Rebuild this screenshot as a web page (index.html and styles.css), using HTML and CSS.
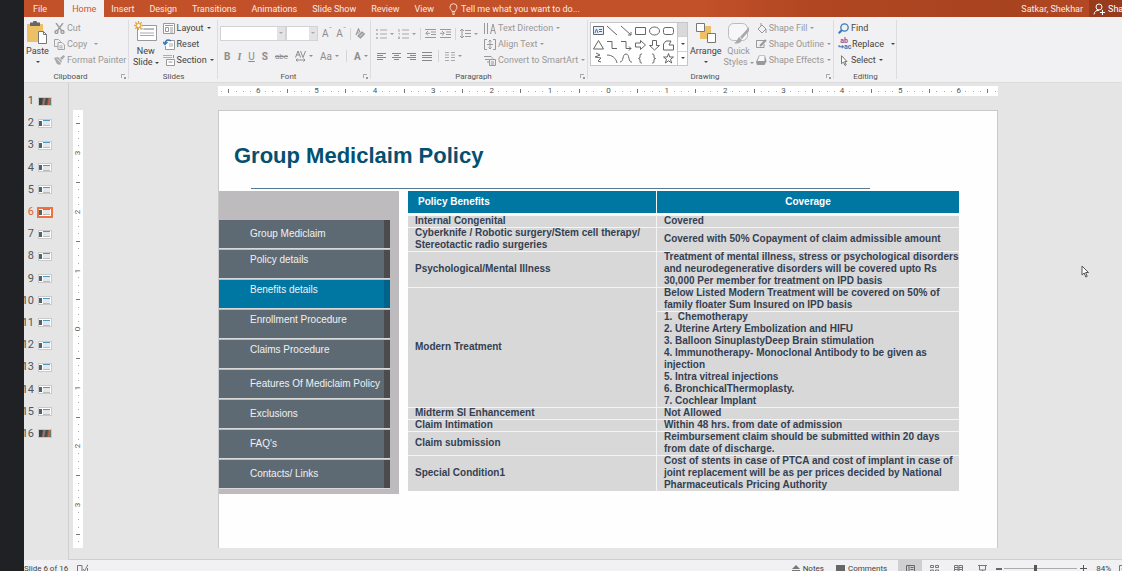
FILE: index.html
```html
<!DOCTYPE html>
<html lang="en">
<head>
<meta charset="utf-8">
<title>Group Mediclaim Policy</title>
<link rel="stylesheet" href="styles.css">
</head>
<body>
<div class="screen">
<div class="edge"></div>
<div class="app">
  <header class="tabs">
    <nav class="tab-list">
      <button class="tab file">File</button>
      <button class="tab active">Home</button>
      <button class="tab">Insert</button>
      <button class="tab">Design</button>
      <button class="tab">Transitions</button>
      <button class="tab">Animations</button>
      <button class="tab">Slide Show</button>
      <button class="tab">Review</button>
      <button class="tab">View</button>
      <button class="tab tell"><svg width="9" height="12" viewBox="0 0 9 12" fill="none" stroke="#f6dccf"><path d="M3 8.500C3 7 1 6.300 1 4.200a3.500 3.500 0 0 1 7 0C8 6.300 6 7 6 8.500zM3 10h3M3.500 11.500h2"/></svg>Tell me what you want to do...</button>
    </nav>
    <div class="account"><span class="user">Satkar, Shekhar</span>
      <button class="share"><svg width="12" height="12" viewBox="0 0 12 12" fill="none" stroke="#fff"><circle cx="6" cy="4" r="3"/><path d="M1 11.500C1.500 8.500 3 7.300 6 7.300M9.500 7v5M7 9.500h5"/></svg>Share</button></div>
  </header>

  <div class="ribbon">
    <section class="group clipboard">
      <div class="body">
        <button class="big"><svg width="22" height="23" viewBox="0 0 22 23"><path d="M1 3h16v18H1z" fill="#edc067"/><path d="M4 1.500h3a2 2 0 0 1 4 0h3V5H4z" fill="#666"/><path d="M12.500 10.500h5l3 3v9h-8z" fill="#fff" stroke="#777"/><path d="M17.500 10.500v3h3" fill="none" stroke="#777"/></svg><span>Paste</span><i class="arr"></i></button>
        <div class="stack dim">
          <button><svg width="11" height="11" viewBox="0 0 11 11" fill="none" stroke="#999" stroke-width="1.300"><path d="M2 0l5.500 7.500M9 0L3.500 7.500"/><circle cx="2.500" cy="9" r="1.500"/><circle cx="8.500" cy="9" r="1.500"/></svg>Cut</button>
          <button><svg width="11" height="11" viewBox="0 0 11 11" fill="#f1f0f2" stroke="#a5a5a5"><path d="M.5.500h4l2 2v5h-6z"/><path d="M4 3.500h4l2.500 2.500v4.500H4zM5.500 7h3M5.500 8.800h3"/></svg>Copy<i class="arr gap"></i></button>
          <button><svg width="11" height="11" viewBox="0 0 11 11" fill="#aaa"><path d="M0 3l4-1 4 4-2 4-3-1zM6 3l3.500-3L11 1.500 8 5z"/><path d="M3 3.500l3.500 4" stroke="#f1f0f2"/></svg>Format Painter</button>
        </div>
      </div>
      <footer>Clipboard<i class="launch"></i></footer>
    </section>

    <section class="group slides">
      <div class="body">
        <button class="big"><svg width="23" height="23" viewBox="0 0 23 23" fill="none"><path d="M3.500 4.500h19v15h-19z" fill="#fff" stroke="#999"/><path d="M6 8h14M6 12h14M6 14.500h14" stroke="#aaa"/><path d="M10 7h10v2H10z" fill="#bbb"/><path d="M4.500 0v9M0 4.500h9M1.300 1.300l6.400 6.400M7.700 1.300L1.300 7.700" stroke="#e8a63c" stroke-width="1.300"/><circle cx="4.500" cy="4.500" r="2" fill="#fff" stroke="#e8a63c"/></svg><span>New</span><span>Slide<i class="arr"></i></span></button>
        <div class="stack">
          <button><svg width="12" height="11" viewBox="0 0 12 11" fill="#fff" stroke="#999"><path d="M.5.500h11v10H.5zM2 2.500h8"/><path d="M2.500 4.500h3v4h-3zM7 5h3M7 7h3M7 9h3"/></svg>Layout<i class="arr"></i></button>
          <button><svg width="12" height="11" viewBox="0 0 12 11" fill="none"><path d="M3.500 1.500h8v9h-9V7" stroke="#999" fill="#fff"/><path d="M6 5h4M6 7h4" stroke="#aaa"/><path d="M8 2C5 0 2 1 2 5M0 3l2 2.500L4.500 3" stroke="#397bb8" stroke-width="1.500"/></svg>Reset</button>
          <button><svg width="12" height="12" viewBox="0 0 12 12" fill="#fff"><path d="M0 1.500h9M0 3.500h9" stroke="#e8a63c" stroke-width="1.200"/><path d="M10.500 1v3" stroke="#e2793c"/><path d="M3.500 5.500h8v6h-8zM5.500 8h4" stroke="#999"/></svg>Section<i class="arr"></i></button>
        </div>
      </div>
      <footer>Slides</footer>
    </section>

    <section class="group font">
      <div class="rows dim">
        <div class="row">
          <span class="combo wide"><select aria-label="Font"><option></option></select></span><span class="combo"><select aria-label="Font size"><option></option></select></span>
          <button class="t grow">A<sup>ˆ</sup></button><button class="t shrink">A<sup>ˇ</sup></button><i class="sep"></i>
          <button aria-label="Clear formatting"><svg width="10" height="11" viewBox="0 0 10 11" fill="none" stroke="#999" stroke-width="1.200"><path d="M1 7l2.500-6L5 4.500M2 5h2"/><path d="M3 8l4-4 2.500 2-4 4z" fill="#bbb"/></svg></button>
        </div>
        <div class="row second">
          <button class="t b">B</button><button class="t i">I</button><button class="t u">U</button><button class="t b">S</button><button class="t s">abc</button><button class="t av"><svg width="11" height="12" viewBox="0 0 11 12" fill="none" stroke="#8d8d8d"><path d="M.5 7.500L3 1l2.500 6.500M1.500 5h3M5.500 1L8 7.500 10.500 1M1 10h9M2.500 8.500L1 10l1.500 1.500M8.500 8.500L10 10l-1.500 1.500"/></svg><i class="arr"></i></button><button class="t">Aa<i class="arr"></i></button><i class="sep"></i><button class="t b color">A<i class="arr"></i></button>
        </div>
      </div>
      <footer>Font<i class="launch"></i></footer>
    </section>

    <section class="group paragraph">
      <div class="body">
      <div class="rows dim">
        <div class="row">
          <button aria-label="Bullets"><svg width="11" height="10" viewBox="0 0 11 10" stroke="#aaa"><path d="M0 1h2M0 5h2M0 9h2" stroke-width="1.500"/><path d="M4 1h7M4 5h7M4 9h7"/></svg><i class="arr"></i></button>
          <button aria-label="Numbering"><svg width="11" height="10" viewBox="0 0 11 10" stroke="#aaa" fill="none"><path d="M1 0v3M.5 4.500h1v1M0 8h1.500v1.500H0M4 1h7M4 5h7M4 9h7"/></svg><i class="arr"></i></button><i class="sep"></i>
          <button aria-label="Decrease indent"><svg width="11" height="9" viewBox="0 0 11 9" fill="none" stroke="#999"><path d="M0 .5h11M6 3h5M6 5.500h5M0 8.500h11M5 4.300H1M3 2L.8 4.300 3 6.500"/></svg></button>
          <button aria-label="Increase indent"><svg width="11" height="9" viewBox="0 0 11 9" fill="none" stroke="#999"><path d="M0 .5h11M6 3h5M6 5.500h5M0 8.500h11M0 4.300h4M2 2l2.300 2.300L2 6.500"/></svg></button><i class="sep"></i>
          <button aria-label="Line spacing"><svg width="11" height="11" viewBox="0 0 11 11" fill="none" stroke="#999"><path d="M2 1v9M0 3l2-2 2 2M0 8l2 2 2-2M5 2.500h6M5 5.500h6M5 8.500h6"/></svg><i class="arr"></i></button>
        </div>
        <div class="row second aligns">
          <button aria-label="Align left"><svg width="9" height="9" viewBox="0 0 9 9" stroke="#888"><path d="M0 1.500h9M0 3.500h6M0 5.500h9M0 7.500h6"/></svg></button>
          <button aria-label="Center"><svg width="9" height="9" viewBox="0 0 9 9" stroke="#888"><path d="M0 1.500h9M2 3.500h5M0 5.500h9M2 7.500h5"/></svg></button>
          <button aria-label="Align right"><svg width="9" height="9" viewBox="0 0 9 9" stroke="#888"><path d="M0 1.500h9M3 3.500h6M0 5.500h9M3 7.500h6"/></svg></button>
          <button aria-label="Justify"><svg width="10" height="9" viewBox="0 0 10 9" stroke="#888"><path d="M0 .5h10M0 3.500h10M0 5.500h10M0 8.500h10"/></svg></button><i class="sep"></i>
          <button aria-label="Columns"><svg width="10" height="9" viewBox="0 0 10 9" stroke="#aaa"><path d="M0 .5h4M0 3h4M0 5.500h4M0 8.500h4M6 .5h4M6 3h4M6 5.500h4M6 8.500h4"/></svg><i class="arr"></i></button>
        </div>
      </div>
      <div class="stack dim">
        <button><svg width="12" height="11" viewBox="0 0 12 11" fill="none" stroke="#999"><path d="M.5 0v11M3.500 0v11M6.500 11l2.500-10 2.500 10M7 7.500h4"/></svg>Text Direction<i class="arr"></i></button>
        <button><svg width="12" height="11" viewBox="0 0 12 11" fill="none" stroke="#999"><path d="M3 .5H.5v10H3M9 .5h2.500v10H9M6 1v9M4.500 2.500L6 1l1.500 1.500M4.500 8.500L6 10l1.500-1.500M3 5.500h6"/></svg>Align Text<i class="arr"></i></button>
        <button><svg width="12" height="11" viewBox="0 0 12 11" fill="#eee" stroke="#999"><path d="M0 1.500h7l2 2M1 4.500h5M3 7h2"/><path d="M5.500 4.500h6v6h-6zM7 7h3M7 9h3"/></svg>Convert to SmartArt<i class="arr"></i></button>
      </div>
      </div>
      <footer>Paragraph<i class="launch"></i></footer>
    </section>

    <section class="group drawing">
      <div class="body">
        <div class="gallery">
          <svg width="86" height="43" viewBox="0 0 86 43" fill="none" stroke="#666"><path d="M2.500 3.500h10v8h-10z" fill="#e8f0fa"/><path d="M4 10l1.500-4L7 10" stroke="#397bb8"/><path d="M8 6.500h3M8 8.500h3M16 3l10 9M30 3l10 9M40 9v3h-3M44.500 4.500h10v7h-10z"/><ellipse cx="63.500" cy="8" rx="5" ry="4"/><rect x="72.500" y="4.500" width="10" height="7" rx="2"/><path d="M7.500 17.500l5 8.500h-10zM16 18.500h5v7h5M30 18.500h5v7h5M38 23.500l2 2-2 2M44.500 20h5v-2.500l5 4.500-5 4.500V24h-5zM61.500 17.500h4v5h3l-5 4.500-5-4.500h3zM75 18h5l-2 4h4.500v5h-10v-6zM5 30l4 2-5 2 6 1-3 3 3 1M16 32c5 0 9 3 10 8M29 39c4 0 2-8 6-8s2 9 6 8M51 31h-1q-1 0-1 2v1q0 1.500-1.500 1.500 1.500 0 1.500 1.500v1q0 2 1 2h1M61 31h1q1 0 1 2v1q0 1.500 1.500 1.500-1.500 0-1.500 1.500v1q0 2-1 2h-1M77.500 30.500l1.200 3.500h3.800l-3 2.300 1.200 3.700-3.200-2.200-3.200 2.200 1.200-3.700-3-2.300h3.800z"/></svg>
          <div class="scroll"><button aria-label="Previous shapes"></button><button aria-label="Next shapes"><i class="arr"></i></button><button aria-label="More shapes"><i class="arr more"></i></button></div>
        </div>
        <button class="big arrange"><svg width="22" height="23" viewBox="0 0 22 23"><path d="M5 5h11v13H5z" fill="#edc067"/><path d="M1.500 2.500h8v8h-8zM12.500 12.500h8v9h-8z" fill="#fff" stroke="#777"/></svg><span>Arrange</span><i class="arr"></i></button>
        <button class="big dim"><svg width="23" height="23" viewBox="0 0 23 23"><rect x="1.500" y="2.500" width="19" height="17" rx="5" fill="#f7f6f8" stroke="#bbb"/><path d="M22 6l-9 10 2 2 7-8zM12 16l3 3c-2 4-5 4-8 3 3-1 3-4 5-6z" fill="#aaa"/></svg><span>Quick</span><span>Styles<i class="arr"></i></span></button>
        <div class="stack dim shape-tools">
          <button><svg width="11" height="11" viewBox="0 0 11 11" fill="none" stroke="#999"><path d="M2 6l4-4 4 4-4 4zM5 3V0M10 6v4"/></svg>Shape Fill<i class="arr"></i></button>
          <button><svg width="11" height="11" viewBox="0 0 11 11" fill="none" stroke="#999"><path d="M9 1.500H.5v7H8V5"/><path d="M4 7l6-6" stroke-width="2"/></svg>Shape Outline<i class="arr"></i></button>
          <button><svg width="11" height="11" viewBox="0 0 11 11"><path d="M3 .5h6l1.500 6-2 3.500H1L0 7z" fill="#999"/><path d="M3.500 1h5v5h-7z" fill="#f7f7f7"/></svg>Shape Effects<i class="arr"></i></button>
        </div>
      </div>
      <footer>Drawing<i class="launch"></i></footer>
    </section>

    <section class="group editing">
      <div class="body">
        <div class="stack">
          <button><svg width="11" height="11" viewBox="0 0 11 11" fill="none" stroke="#397bb8"><circle cx="6.500" cy="4.500" r="3.700" stroke-width="1.300"/><path d="M4 7L.7 10.300" stroke-width="2"/></svg>Find</button>
          <button><span class="abac"><b>ab</b><b>↪ac</b></span>Replace<i class="arr gap"></i></button>
          <button><svg width="11" height="11" viewBox="0 0 11 11" fill="#fff" stroke="#777"><path d="M3.500.700v8l2-1.700 1.500 3.500 1.200-.6L6.700 6.500H9z"/></svg>Select<i class="arr"></i></button>
        </div>
      </div>
      <footer>Editing</footer>
    </section>
  </div>

  <div class="work">
    <aside><ol class="thumbs" id="thumbs"></ol></aside>
    <main class="stage">
      <div class="ruler across" id="across"></div>
      <div class="ruler down" id="down"></div>
      <article class="slide">
        <h1>Group Mediclaim Policy</h1>
        <div class="content">
          <nav class="menu">
            <a href="#">Group Mediclaim</a>
            <a href="#" class="high">Policy details</a>
            <a href="#" class="high current">Benefits details</a>
            <a href="#" class="high">Enrollment Procedure</a>
            <a href="#" class="high">Claims Procedure</a>
            <a href="#">Features Of Mediclaim Policy</a>
            <a href="#">Exclusions</a>
            <a href="#">FAQ's</a>
            <a href="#">Contacts/ Links</a>
          </nav>
          <table>
            <thead><tr><th class="first">Policy Benefits</th><th>Coverage</th></tr></thead>
            <tbody>
              <tr><td>Internal Congenital</td><td>Covered</td></tr>
              <tr><td>Cyberknife / Robotic surgery/Stem cell therapy/<br>Stereotactic radio surgeries</td><td>Covered with 50% Copayment of claim admissible amount</td></tr>
              <tr><td>Psychological/Mental Illness</td><td>Treatment of mental illness, stress or psychological disorders<br>and neurodegenerative disorders will be covered upto Rs<br>30,000 Per member for treatment on IPD basis</td></tr>
              <tr><td rowspan="2">Modern Treatment</td><td>Below Listed Modern Treatment will be covered on 50% of<br>family floater Sum Insured on IPD basis</td></tr>
              <tr><td>1.&nbsp; Chemotherapy<br>2. Uterine Artery Embolization and HIFU<br>3. Balloon SinuplastyDeep Brain stimulation<br>4. Immunotherapy- Monoclonal Antibody to be given as<br>injection<br>5. Intra vitreal injections<br>6. BronchicalThermoplasty.<br>7. Cochlear Implant</td></tr>
              <tr><td>Midterm SI Enhancement</td><td>Not Allowed</td></tr>
              <tr><td>Claim Intimation</td><td>Within 48 hrs. from date of admission</td></tr>
              <tr><td>Claim submission</td><td>Reimbursement claim should be submitted within 20 days<br>from date of discharge.</td></tr>
              <tr><td>Special Condition1</td><td>Cost of stents in case of PTCA and cost of implant in case of<br>joint replacement will be as per prices decided by National<br>Pharmaceuticals Pricing Authority</td></tr>
            </tbody>
          </table>
        </div>
      </article>
      <svg class="pointer" width="8" height="13" viewBox="0 0 8 13" fill="#fff" stroke="#555"><path d="M1 1v9l2.200-2 1.600 4 1.400-.6L4.600 7.500h2.900z"/></svg>
    </main>
  </div>

  <footer class="status">
    <span class="count">Slide 6 of 16</span>
    <svg width="11" height="9" viewBox="0 0 11 9" fill="none" stroke="#777"><path d="M5 1.500H.5v7h10V4M5 1.500v7M6 5l1.500 2L11 .5"/></svg>
    <div class="tools">
      <button class="notes"><svg width="8" height="8" viewBox="0 0 8 8" fill="#777"><path d="M4 0l4 4H0zM0 5h8v1H0zM0 7h8v1H0z"/></svg>Notes</button>
      <button class="comments"><svg width="9" height="8" viewBox="0 0 9 8" fill="#666"><path d="M0 0h9v6H6L4 8V6H0z"/></svg>Comments</button>
      <button class="view on" aria-label="Normal"><svg width="9" height="8" viewBox="0 0 9 8" fill="none" stroke="#666"><path d="M.5.500h8v7h-8zM3 0v8M4.500 2.500h3M4.500 4.500h3"/></svg></button>
      <button class="view" aria-label="Slide sorter"><svg width="9" height="8" viewBox="0 0 9 8" fill="none" stroke="#777"><path d="M.5.500h3v2h-3zM5.500.500h3v2h-3zM.5 5h3v2h-3zM5.500 5h3v2h-3z"/></svg></button>
      <button class="view" aria-label="Reading view"><svg width="9" height="8" viewBox="0 0 9 8" fill="none" stroke="#777"><path d="M.5.500h3.500v7H.5zM5 .5h3.500v7H5zM1 2.500h3M1 4.500h3M5 2.500h3M5 4.500h3"/></svg></button>
      <button class="view" aria-label="Slide show"><svg width="9" height="8" viewBox="0 0 9 8" fill="none" stroke="#777"><path d="M0 .5h9M1.500 1v4h6V1M4.500 5v2M2.500 7.500h4"/></svg></button>
      <button aria-label="Zoom out"><svg width="6" height="6" viewBox="0 0 6 6"><path d="M0 2h6v2H0z" fill="#666"/></svg></button>
      <input type="range" aria-label="Zoom" min="0" max="100" value="42">
      <button aria-label="Zoom in"><svg width="7" height="7" viewBox="0 0 7 7"><path d="M0 3h3V0h1v3h3v1H4v3H3V4H0z" fill="#555"/></svg></button>
      <span class="percent">84%</span>
      <svg width="8" height="8" viewBox="0 0 8 8" fill="none" stroke="#777"><path d="M.5.500h7v7h-7zM2.500 4h3"/></svg>
    </div>
  </footer>
</div>
</div>
<script src="app.js"></script>
</body>
</html>
```
FILE: styles.css
```css
* { box-sizing: border-box; }
body { margin: 0; overflow: hidden; font-family: Roboto, "Noto Sans", sans-serif; font-size: 9px; color: #444; }
button { font: inherit; color: inherit; background: none; border: 0; padding: 0; margin: 0; display: flex; align-items: center; white-space: nowrap; }
svg { display: block; flex: none; }
.screen { display: flex; height: 100vh; min-height: 571px; }
.edge { flex: 0 0 24px; background: #202125; }
.app { flex: 1; min-width: 0; display: flex; flex-direction: column; background: #e5e5e5; }

.tabs { flex: 0 0 17px; display: flex; justify-content: space-between; overflow: hidden; color: #fbe9e1; background: linear-gradient(90deg, #c25028 0 62%, #b04722 72%, #a8431f 90%, #b84b25); }
.tab-list { display: flex; }
.tab { height: 17px; padding: 0 8px; }
.tab.file { padding: 0 17px 0 9px; }
.tab.active { background: #f1f0f2; color: #d0552f; }
.tab.active ~ .tab { padding: 0 8px 0 7px; }
.tab.tell { gap: 3px; }
.account { display: flex; align-items: center; margin-right: -9px; }
.user { padding-right: 6px; }
.share { height: 17px; padding-left: 4px; gap: 3px; background: #973b1c; color: #fff; }

.ribbon { flex: 0 0 66px; display: flex; background: #f1f0f2; border-bottom: 1px solid #dcdbdd; }
.group { position: relative; display: flex; flex-direction: column; justify-content: space-between; padding-top: 3px; }
.group::after { content: ""; position: absolute; right: 0; top: 3px; bottom: 3px; width: 1px; background: #dddcde; }
.group > footer { height: 13px; line-height: 16px; text-align: center; font-size: 8px; color: #555; }
.group > footer:has(.launch) { padding-right: 12px; }
.launch { position: absolute; right: 4px; bottom: 4px; width: 4px; height: 4px; border: solid #aaa; border-width: 1px 0 0 1px; }
.launch::after { content: ""; position: absolute; right: -1px; bottom: -1px; width: 2px; height: 2px; background: #999; }
.clipboard { width: 105px; }
.slides { width: 89px; }
.font { width: 153px; }
.paragraph { width: 217px; }
.drawing { width: 246px; }
.editing { width: 63px; }
.body { display: flex; }
.stack { display: flex; flex-direction: column; }
.stack button { height: 16px; gap: 2px; }
.dim { color: #999; }
.big { flex-direction: column; justify-content: flex-start; line-height: 11px; padding-top: 1px; }
.big svg { margin-bottom: 2px; }
.big > span { display: flex; align-items: center; gap: 1px; }
.big > .arr { margin-top: 4px; }
.arr { display: inline-block; flex: none; border: 2px solid transparent; border-top-color: currentColor; border-bottom: 0; margin-left: 1px; }
.arr.gap { margin-left: 5px; }
.clipboard .body { gap: 5px; padding-left: 2px; }
.slides .body { gap: 4px; padding-left: 4px; }
.paragraph .body { gap: 6px; padding-left: 5px; }

.rows { display: flex; flex-direction: column; }
.row { display: flex; align-items: center; height: 27px; gap: 4px; }
.row.second { height: 18px; }
.font .rows { padding-left: 2px; }
.font .second { gap: 7px; padding-left: 4px; }
.t { font-size: 10px; color: #8d8d8d; }
.t .arr, .row button .arr { margin-left: 3px; }
.t sup { font-size: 8px; line-height: 6px; align-self: flex-start; }
.b { font-weight: 700; }
.i { font-style: italic; font-weight: 700; font-family: "Liberation Serif", serif; }
.u { text-decoration: underline; }
.s { text-decoration: line-through; font-size: 8px; }
.sep { width: 1px; height: 12px; background: #d6d5d7; }
.combo { position: relative; width: 32px; height: 15px; border: 1px solid #d3d2d4; background: linear-gradient(90deg, #fff 0 calc(100% - 8px), #e3e2e4 0); }
.combo.wide { width: 66px; margin-right: -4px; }
.combo select { appearance: none; display: block; width: 100%; height: 100%; border: 0; background: none; }
.combo::after { content: ""; position: absolute; right: 2px; top: 5px; border: 2px solid transparent; border-top-color: #aaa; border-bottom: 0; pointer-events: none; }
.aligns { gap: 6px; padding-left: 1px; }

.drawing .body { padding-left: 2px; gap: 2px; }
.gallery { display: flex; height: 44px; margin-top: 2px; border: 1px solid #c6c5c7; background: #fff; }
.scroll { width: 10px; display: flex; flex-direction: column; border-left: 1px solid #c6c5c7; }
.scroll button { flex: 1; justify-content: center; border-bottom: 1px solid #d2d1d3; }
.scroll button:first-child { background: #d9d8da; }
.scroll button:last-child { border-bottom: 0; }
.scroll .arr { margin: 0; }
.scroll .more { box-shadow: 0 -2px 0 -1px #777; }
.editing .body { padding-left: 4px; }
.abac { display: flex; flex-direction: column; width: 12px; font-size: 7px; line-height: 6px; color: #8a55a0; }
.abac b + b { color: #397bb8; }

.work { flex: 1; display: flex; min-height: 0; }
aside { flex: 0 0 45px; border-right: 1px solid #cfcfcf; padding-top: 7px; overflow: hidden; }
.thumbs { margin: 0; padding: 0; list-style: none; height: 355px; display: flex; flex-direction: column; }
.thumbs li { flex: 1; display: flex; align-items: center; justify-content: flex-end; gap: 4px; padding-right: 16px; margin-left: -10px; font-size: 11px; line-height: 14px; color: #555; }
.thumb { width: 14px; height: 9px; background: #fff; border: 1px solid #c9c9c9; display: flex; align-items: center; gap: 1px; }
.thumb::before { content: ""; width: 3px; height: 5px; background: #4d6570; }
.thumb::after { content: ""; width: 7px; height: 4px; border-top: 1px solid #4b9cba; border-bottom: 1px solid #bbb; background: #e4e7e9; }
.thumbs .now { color: #e0623d; padding-right: 15px; gap: 3px; }
.now .thumb { width: 16px; height: 11px; border: 2px solid #f0703f; }
.thumb.photo { background: linear-gradient(100deg, #36434a 0 25%, #b87860 40%, #2c4a50 60%, #c66543 80%, #2f8799); }
.thumb.photo::before, .thumb.photo::after { display: none; }

.stage { flex: 1; min-width: 0; position: relative; display: grid; grid-template: 10px minmax(0, 1fr) / 10px minmax(0, 1fr); gap: 14px 135px; padding: 3px 124px 11px 4px; border-bottom: 1px solid #cfcfcf; }
.ruler { display: flex; background: #fff; font-size: 8px; line-height: 10px; color: #555; }
.across { grid-area: 1 / 2; }
.down { grid-area: 2 / 1; flex-direction: column; padding: 3px 0; }
.ruler span { flex: 1 1 0; min-width: 0; min-height: 0; display: flex; align-items: center; justify-content: center; }
.ruler span::before { content: ""; flex: none; width: 1px; height: 1px; background: #aaa; }
.ruler .num::before { display: none; }
.across .half::before { height: 4px; background: #777; }
.down .half::before { width: 4px; background: #777; }
.down b { transform: rotate(-90deg); }
.ruler b { font-weight: 400; }

.slide { grid-area: 2 / 2; background: #fefefe; border: solid #c9c9c9; border-width: 1px 1px 0; font-family: "Liberation Sans", Arial, sans-serif; }
.slide h1 { margin: 0; padding: 31px 0 0 15px; height: 77px; font-size: 22px; line-height: 28px; color: #045070; }
.slide h1::after { content: ""; display: block; height: 1px; margin: 18px 127px 0 17px; background: #587793; }
.content { display: flex; gap: 9px; padding: 3px 38px 0 0; align-items: flex-start; }
.menu { flex: 0 0 180px; display: flex; flex-direction: column; gap: 2px; padding: 29px 9px 6px 0; background: #bdbbbd; }
.menu a { height: 28px; padding-left: 31px; display: flex; align-items: center; font-size: 10px; line-height: 14px; white-space: nowrap; color: #eef1f3; text-decoration: none; background: #5e6a73; border-right: 6px solid #4b4a4d; box-shadow: 0 1px 0 #d9d9da; }
.menu .high { align-items: flex-start; padding-top: 3px; }
.menu .current { background: #0077a3; border-right-color: #006389; }
table { flex: 1; min-width: 0; width: 100%; table-layout: fixed; border-collapse: separate; border-spacing: 0; font-size: 10px; line-height: 12px; font-weight: 700; color: #343f52; }
th { height: 24px; padding: 0; background: #0077a3; color: #fff; border-bottom: 2px solid #fefefe; }
th.first { width: 45%; text-align: left; padding-left: 10px; }
td { padding: 0 0 0 7px; background: #d8d8d8; box-shadow: inset 0 1px 0 #f4f4f4; white-space: nowrap; }
td + td, th + th, td:only-child { border-left: 1px solid #f4f4f4; }
.pointer { position: absolute; right: 33px; top: 182px; }

.status { flex: 0 0 11px; overflow: hidden; display: flex; align-items: flex-start; background: #f1f0f2; font-size: 8px; line-height: 17px; }
.status > svg { margin: 4px 0 0 9px; }
.tools { margin-left: auto; margin-right: -5px; display: flex; align-items: center; height: 17px; }
.tools button { height: 17px; gap: 3px; }
.tools .notes { margin-right: 12px; }
.tools .comments { margin-right: 11px; }
.tools .view { width: 24px; justify-content: center; }
.tools .view:nth-of-type(6) { margin-right: 2px; }
.view.on { background: #cfced0; }
.tools input { appearance: none; width: 73px; height: 9px; margin: 0 3px 0 2px; background: linear-gradient(#aaa, #aaa) center / 100% 1px no-repeat; }
.tools input::-webkit-slider-thumb { appearance: none; width: 3px; height: 8px; background: #555; }
.percent { margin: 0 8px 0 9px; }
```
FILE: app.js
```js
// Slide list
const thumbs = document.getElementById('thumbs');
for (let n = 1; n <= 16; n++) {
  const li = document.createElement('li');
  if (n === 6) li.className = 'now';
  const photo = n === 1 || n === 16 ? ' photo' : '';
  li.innerHTML = n + '<span class="thumb' + photo + '"></span>';
  thumbs.append(li);
}

// Ruler marks, eight to the inch, counted from the centre
function marks(id, reach) {
  const ruler = document.getElementById(id);
  for (let k = -reach; k <= reach; k++) {
    const mark = document.createElement('span');
    if (k % 8 === 0) {
      mark.className = 'num';
      mark.innerHTML = '<b>' + Math.abs(k / 8) + '</b>';
    } else if (k % 4 === 0) {
      mark.className = 'half';
    }
    ruler.append(mark);
  }
}
marks('across', 53);
marks('down', 29);
```
